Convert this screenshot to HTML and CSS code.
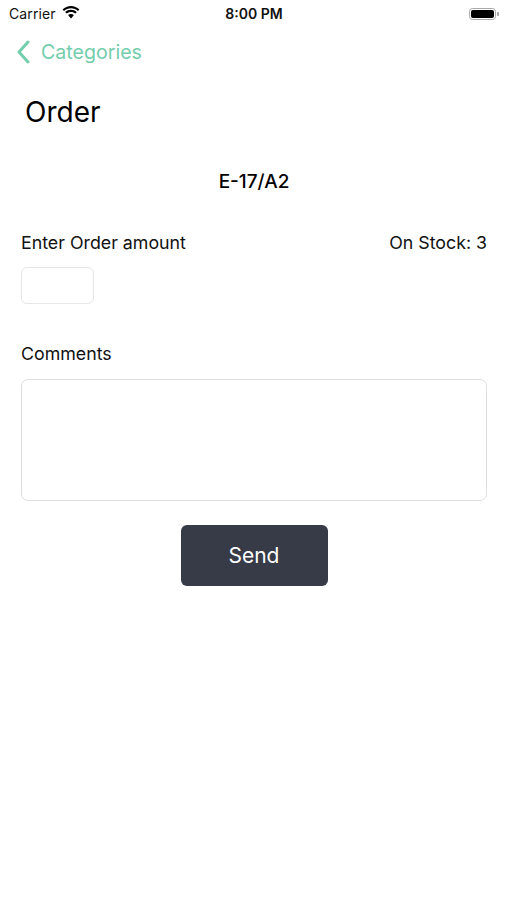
FILE: index.html
```html
<!DOCTYPE html>
<html>
<head>
<meta charset="utf-8">
<link rel="stylesheet" href="styles.css">
</head>
<body>
<div class="screen">
  <div class="statusbar">
    <div class="sb-left">
      <span class="carrier">Carrier</span>
      <svg class="wifi" width="18" height="13" viewBox="0 0 18 13">
        <path d="M9 2.2c2.7 0 5.1 1 7 2.7l1.4-1.5C15.1 1.3 12.2 0 9 0S2.9 1.3.6 3.4L2 4.9c1.9-1.7 4.3-2.7 7-2.7z" fill="#000"/>
        <path d="M9 5.9c1.7 0 3.2.6 4.4 1.6l1.4-1.5C13.2 4.6 11.2 3.8 9 3.8S4.8 4.6 3.2 6l1.4 1.5C5.8 6.5 7.3 5.9 9 5.9z" fill="#000"/>
        <path d="M9 9.5c.8 0 1.5.3 2 .7L9 12.6 7 10.2c.5-.4 1.2-.7 2-.7z M6.1 9.1C6.9 8.4 7.9 8 9 8s2.1.4 2.9 1.1l-1 1.1C10.4 9.8 9.7 9.5 9 9.5s-1.4.3-1.9.7z" fill="#000"/>
      </svg>
    </div>
    <span class="time">8:00 PM</span>
    <div class="sb-right">
      <div class="battery"><div class="battery-fill"></div></div>
      <div class="battery-cap"></div>
    </div>
  </div>

  <div class="navbar">
    <svg class="chevron" width="14" height="24" viewBox="0 0 14 24">
      <path d="M12 2 L3 12 L12 22" fill="none" stroke="#74cdac" stroke-width="3" stroke-linecap="round" stroke-linejoin="round"/>
    </svg>
    <span class="back-label">Categories</span>
  </div>

  <h1 class="title">Order</h1>

  <div class="content">
    <div class="code">E-17/A2</div>

    <div class="row">
      <span class="label">Enter Order amount</span>
      <span class="label">On Stock: 3</span>
    </div>
    <div class="amount-input"></div>

    <div class="label comments-label">Comments</div>
    <div class="comments-box"></div>

    <div class="btn-wrap">
      <div class="send-btn">Send</div>
    </div>
  </div>
</div>
</body>
</html>
```

FILE: styles.css
```css
* { box-sizing: border-box; }
html, body {
  margin: 0;
  padding: 0;
  background: #fff;
}
body {
  font-family: "Inter", "Roboto", "Liberation Sans", sans-serif;
  color: #000;
}
.screen {
  width: 507px;
  height: 900px;
  background: #fff;
}
.statusbar {
  height: 27px;
  display: flex;
  align-items: center;
  justify-content: space-between;
  padding: 0 8px 0 9px;
}
.sb-left {
  display: flex;
  align-items: center;
  gap: 6px;
  width: 120px;
}
.carrier {
  font-size: 14px;
  color: #111;
  letter-spacing: 0.1px;
}
.wifi { margin-top: -2px; }
.time {
  font-size: 14px;
  font-weight: 600;
  color: #111;
}
.sb-right {
  width: 120px;
  display: flex;
  justify-content: flex-end;
  align-items: center;
}
.battery {
  width: 27px;
  height: 12px;
  border: 1px solid #a9a9a9;
  border-radius: 3.5px;
  padding: 1px;
}
.battery-fill {
  width: 100%;
  height: 100%;
  background: #000;
  border-radius: 2px;
}
.battery-cap {
  width: 2px;
  height: 4px;
  background: #a9a9a9;
  border-radius: 0 1px 1px 0;
  margin-left: 1px;
}
.navbar {
  height: 50px;
  display: flex;
  align-items: center;
  padding-left: 16px;
  gap: 11px;
}
.back-label {
  font-size: 19.6px;
  color: #74cdac;
}
.title {
  margin: 0;
  padding-left: 25px;
  font-size: 28px;
  font-weight: 400;
  height: 70px;
  line-height: 70px;
}
.content {
  padding: 0 20px 0 21px;
}
.code {
  text-align: center;
  font-size: 19px;
  font-weight: 500;
  margin-top: 23px;
  line-height: 24px;
}
.row {
  display: flex;
  justify-content: space-between;
  margin-top: 37px;
}
.label {
  font-size: 17.8px;
  line-height: 24px;
  color: #111;
}
.amount-input {
  width: 73px;
  height: 37px;
  border: 1px solid #e6e6e6;
  border-radius: 6px;
  margin-top: 12px;
}
.comments-label {
  margin-top: 38px;
}
.comments-box {
  height: 122px;
  border: 1.5px solid #dedede;
  border-radius: 7px;
  margin-top: 13px;
}
.btn-wrap {
  display: flex;
  justify-content: center;
  margin-top: 24px;
}
.send-btn {
  width: 147px;
  height: 61px;
  background: #363b47;
  border-radius: 6px;
  color: #fff;
  font-size: 21px;
  display: flex;
  align-items: center;
  justify-content: center;
}
```
